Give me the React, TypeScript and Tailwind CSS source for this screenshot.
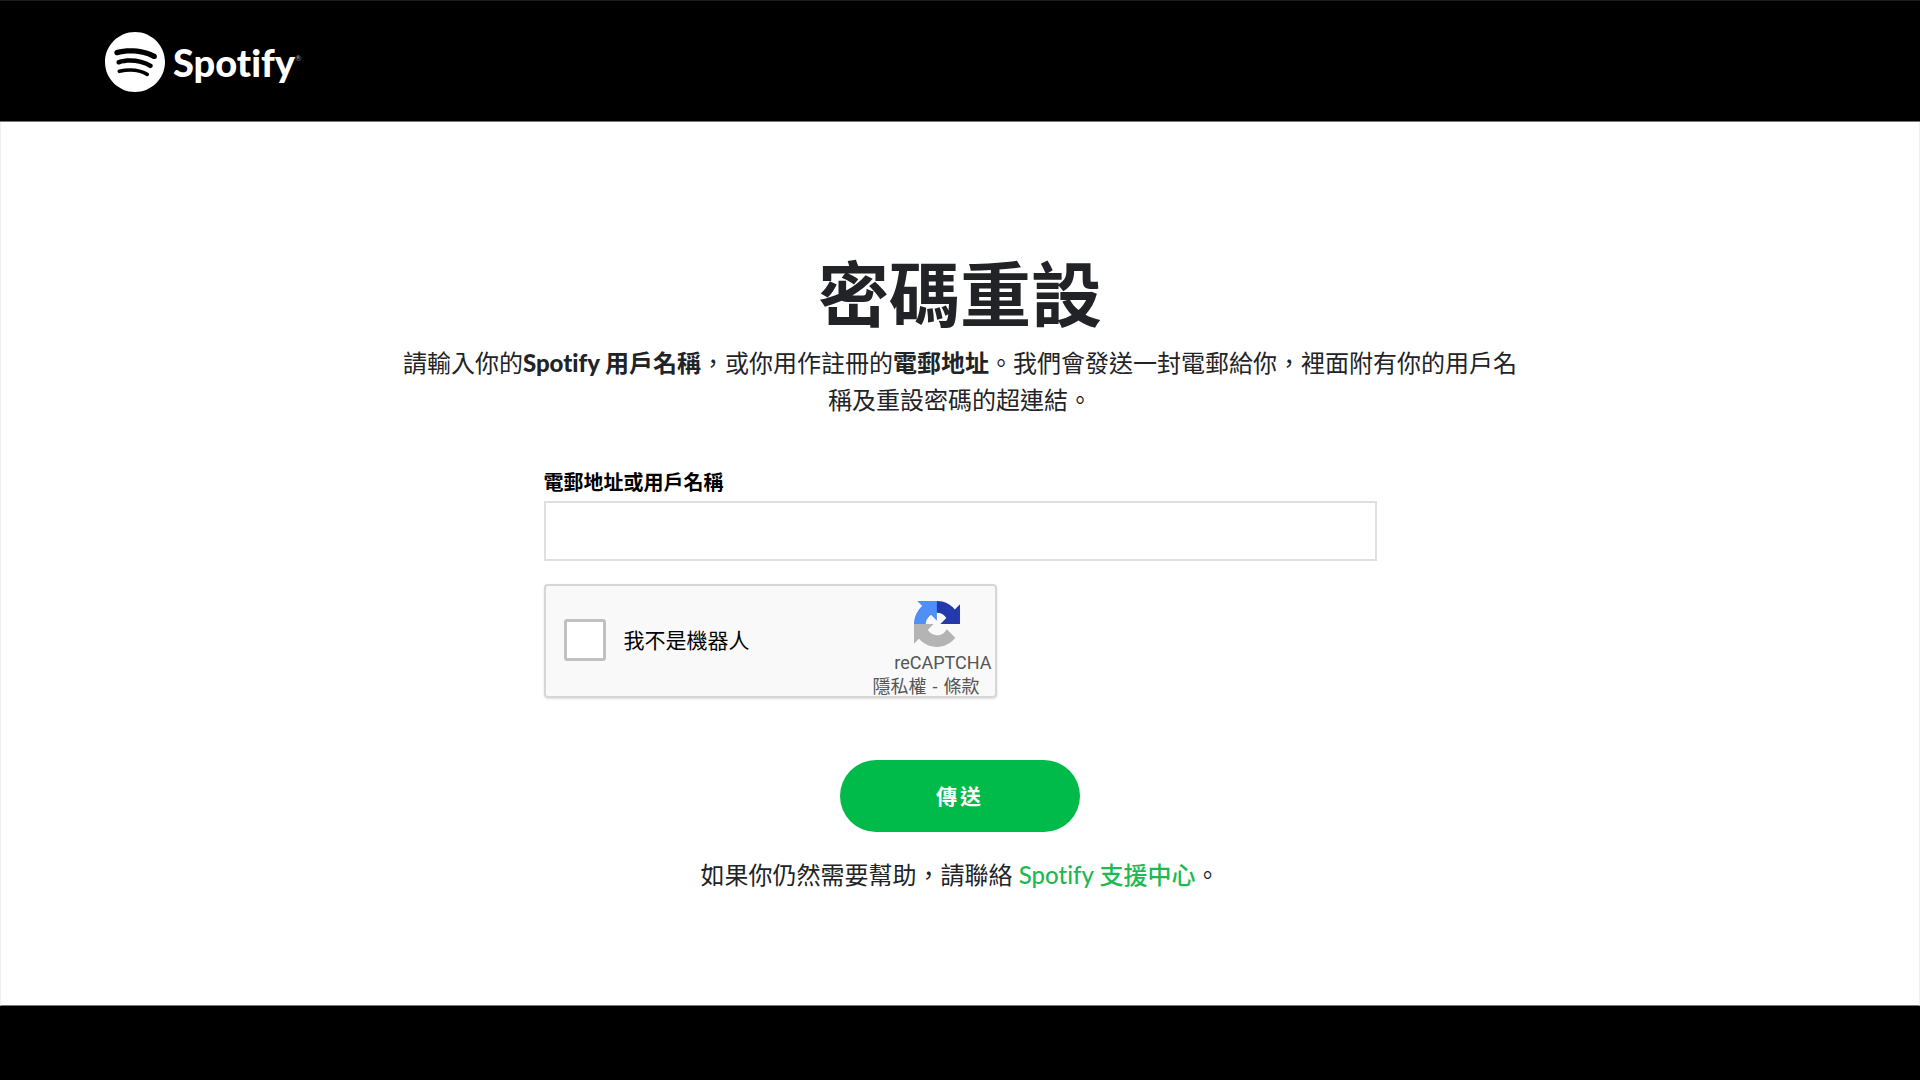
import { useState } from 'react';
import { SiSpotify } from 'react-icons/si';

function Header() {
  return (
    <header className="bg-black border-t border-t-[#1c1c1c] border-b border-b-[#777] px-[105px] pt-[31px] pb-[29px]">
      <a href="#" className="inline-flex items-center gap-2 text-white align-top">
        <SiSpotify className="size-[60px]" />
        <span className="flex items-center text-[38px] leading-[48px] font-black">
          Spotify
          <span className="text-[8px] leading-4 pb-2 font-normal text-[#999]">®</span>
        </span>
      </a>
    </header>
  );
}

function RecaptchaLogo() {
  return (
    <svg className="size-[46px]" viewBox="0 0 64 64" aria-hidden="true">
      <path fill="#2538ac" d="M64 31.955l-.033-1.37V4.687l-7.16 7.16C50.948 4.674 42.033.093 32.05.093c-10.4 0-19.622 4.96-25.458 12.64l11.736 11.86a15.55 15.55 0 0 1 4.754-5.334c2.05-1.6 4.952-2.906 8.968-2.906.485 0 .86.057 1.135.163 4.976.393 9.288 3.14 11.828 7.124l-8.307 8.307L64 31.953" />
      <path fill="#508ff6" d="M31.862.094l-1.37.033H4.594l7.16 7.16C4.58 13.147 0 22.06 0 32.046c0 10.4 4.96 19.622 12.64 25.458L24.5 45.768a15.55 15.55 0 0 1-5.334-4.754c-1.6-2.05-2.906-4.952-2.906-8.968 0-.485.057-.86.163-1.135.393-4.976 3.14-9.288 7.124-11.828l8.307 8.307L31.86.095" />
      <path fill="#b4b4b4" d="M.001 32.045l.033 1.37v25.898l7.16-7.16c5.86 7.173 14.774 11.754 24.76 11.754 10.4 0 19.622-4.96 25.458-12.64L45.67 39.406a15.55 15.55 0 0 1-4.754 5.334c-2.05 1.6-4.952 2.906-8.968 2.906-.485 0-.86-.057-1.135-.163-4.976-.393-9.288-3.14-11.828-7.124l8.307-8.307c-10.522.04-22.4.066-27.295-.005" />
    </svg>
  );
}

function Recaptcha() {
  const [checked, setChecked] = useState(false);

  return (
    <div className="w-full max-w-[453px] h-[114px] flex items-stretch justify-between rounded-[4px] border-2 border-[#d6d6d6] bg-[#f9f9f9] shadow-sm pl-[18px]">
      <label className="flex items-center gap-[18px] pb-[2px] text-[21px] text-black">
        <input
          type="checkbox"
          checked={checked}
          onChange={(e) => setChecked(e.target.checked)}
          className="appearance-none size-[42px] rounded-[3px] border-3 border-[#c1c1c1] bg-white checked:bg-[#00ba4a]"
        />
        我不是機器人
      </label>

      <div className="flex flex-col items-end pt-[15px] text-[#555] font-[Roboto,'Noto_Sans_CJK_TC',sans-serif]">
        <div className="pr-[35px]">
          <RecaptchaLogo />
        </div>
        <span className="pt-[4px] pr-[3px] text-[18px] leading-6">reCAPTCHA</span>
        <span className="pr-[15px] text-[18px] leading-6 whitespace-nowrap">
          <a href="#">隱私權</a>
          <span className="px-[6px]">-</span>
          <a href="#">條款</a>
        </span>
      </div>
    </div>
  );
}

export default function App() {
  const [account, setAccount] = useState('');

  return (
    <div lang="zh-Hant" className="min-h-screen flex flex-col bg-black text-[#222326] font-[Lato,'Noto_Sans_CJK_TC',sans-serif] [font-variant-ligatures:none]">
      <Header />

      <main className="bg-white border-x border-x-[#f0f0f0] border-b border-b-[#777] px-6 pt-[125px] pb-[112px]">
        <div className="max-w-[1134px] mx-auto text-center">
          <h1 className="text-[71px] leading-[94px] font-bold">密碼重設</h1>
          <p className="pt-[3px] text-[24px] leading-[37px]">
            請輸入你的<strong className="font-black">Spotify </strong><strong>用戶名稱</strong>，或你用作註冊的<strong>電郵地址</strong>。我們會發送一封電郵給你，裡面附有你的用戶名稱及重設密碼的超連結。
          </p>
        </div>

        <form className="max-w-[833px] mx-auto pt-[48px]" onSubmit={(e) => e.preventDefault()}>
          <label htmlFor="account" className="block pb-[3px] text-[20px] leading-[32px] font-bold text-black">
            電郵地址或用戶名稱
          </label>
          <input
            id="account"
            type="text"
            value={account}
            onChange={(e) => setAccount(e.target.value)}
            className="block w-full h-[60px] mb-[23px] px-4 border-2 border-[#dfdfdf] text-[24px] outline-none"
          />
          <Recaptcha />
          <button
            type="submit"
            className="block w-[240px] h-[72px] mt-[62px] mx-auto rounded-full bg-[#00ba4a] text-white text-[21px] font-bold tracking-[3px]"
          >
            傳送
          </button>
        </form>

        <p className="pt-[24px] text-center text-[24px] leading-[37px]">
          如果你仍然需要幫助，請聯絡 <a href="#" className="text-[#1db954] font-medium">Spotify 支援中心</a>。
        </p>
      </main>
    </div>
  );
}
